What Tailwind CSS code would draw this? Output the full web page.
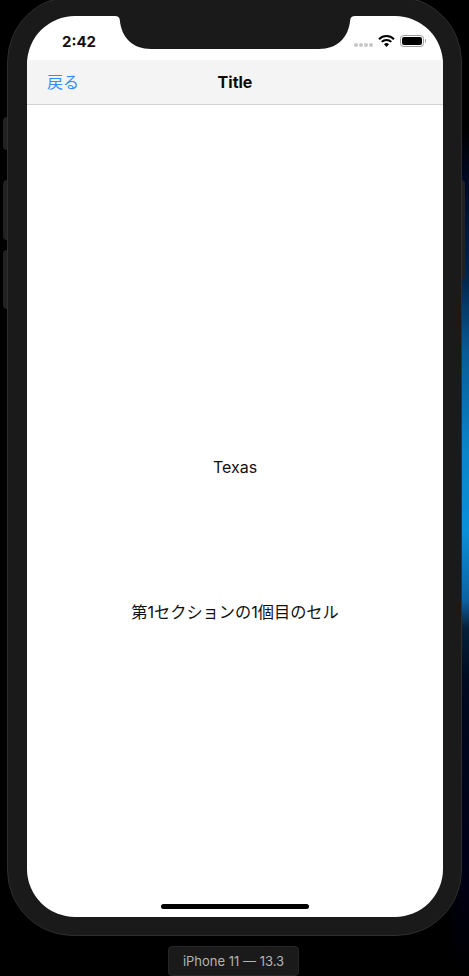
<!DOCTYPE html>
<html lang="ja">
<head>
    <meta charset="UTF-8">
    <title>iPhone 11 Simulator</title>
    <script src="https://cdn.jsdelivr.net/npm/@tailwindcss/browser@4"></script>
</head>
<body class="bg-black">
    <div class="relative w-[469px] h-[976px] overflow-hidden bg-black flex flex-col items-center font-['Inter','Noto_Sans_CJK_JP',sans-serif]">

        <!-- desktop wallpaper behind the right edge -->
        <div class="absolute top-0 right-0 w-[24px] h-full [mask-image:linear-gradient(to_left,#000_40%,transparent)] bg-[linear-gradient(180deg,#000_0px,#000_130px,#000a24_180px,#02264e_280px,#0a5a94_350px,#0a85c8_450px,#0a90d8_530px,#0e62a2_600px,#05203a_628px,#000a20_680px,#000018_860px,#000_976px)]"></div>

        <!-- side buttons -->
        <div class="absolute left-[3px] top-[117px] w-[5px] h-[33px] rounded-l-sm bg-[#222]"></div>
        <div class="absolute left-[3px] top-[180px] w-[5px] h-[60px] rounded-l-sm bg-[#222]"></div>
        <div class="absolute left-[3px] top-[250px] w-[5px] h-[59px] rounded-l-sm bg-[#222]"></div>
        <div class="absolute left-[460px] top-[180px] w-[5px] h-[100px] rounded-r-sm bg-[#222]"></div>

        <!-- device -->
        <div class="relative shrink-0 w-[455px] h-[940px] -mt-[4px] pt-[19px] pl-[19px] pr-[18px] pb-[18px] rounded-[66px] border border-[#2e2e30] bg-[#1a1a1a]">
            <div class="relative h-full rounded-[48px] bg-white overflow-hidden flex flex-col">

                <!-- status bar -->
                <div class="h-[44px] shrink-0 flex items-center justify-between pl-[35px] pr-[17px] pt-[6px]">
                    <span class="mt-[2px] text-[15px] leading-[20px] font-bold text-[#111]">2:42</span>
                    <div class="flex items-center gap-[5px]">
                        <div class="flex gap-[1.5px] mt-[8px]">
                            <i class="w-[3.5px] h-[3.5px] rounded-full bg-[#c6c6c6]"></i>
                            <i class="w-[3.5px] h-[3.5px] rounded-full bg-[#c6c6c6]"></i>
                            <i class="w-[3.5px] h-[3.5px] rounded-full bg-[#c6c6c6]"></i>
                            <i class="w-[3.5px] h-[3.5px] rounded-full bg-[#c6c6c6]"></i>
                        </div>
                        <svg width="17" height="12" viewBox="0 0 17 12" fill="none" stroke="#000" stroke-width="2">
                            <path d="M1 4.2a10.600 10.600 0 0 1 15 0"/>
                            <path d="M3.700 6.900a6.800 6.800 0 0 1 9.600 0"/>
                            <path d="M8.500 12 6 9.300a3.500 3.500 0 0 1 5 0z" fill="#000" stroke="none"/>
                        </svg>
                        <div class="flex items-center gap-[1px]">
                            <div class="w-[24px] h-[12px] rounded-[3.5px] border border-[#9a9a9a] p-[1px]">
                                <div class="w-full h-full rounded-[2px] bg-black"></div>
                            </div>
                            <div class="w-[1.5px] h-[4px] rounded-r-sm bg-[#aaa]"></div>
                        </div>
                    </div>
                </div>

                <!-- nav bar -->
                <div class="h-[45px] shrink-0 relative flex items-center justify-center bg-[#f5f4f5] border-b border-[#d2d2d3]">
                    <span class="absolute left-[20px] text-[16px] text-[#2f8ffb] leading-none">戻る</span>
                    <span class="text-[16px] font-bold text-[#0a0a0a]">Title</span>
                </div>

                <!-- cells -->
                <div class="flex-1 flex flex-col items-center text-[16px] leading-[22px] text-[#111]">
                    <p class="mt-[351px]">Texas</p>
                    <p class="mt-[123px] text-[16.2px]">第1セクションの1個目のセル</p>
                </div>

                <div class="mb-[8px] mx-auto w-[148px] h-[5px] shrink-0 rounded-full bg-black"></div>

                <!-- notch -->
                <svg class="absolute top-0 left-[88px]" width="240" height="34" viewBox="0 0 240 34" fill="#1a1a1a">
                    <path d="M0 0h240c-3 0-4.500 1.500-4.800 4C233.500 22 222 33 204 33H36C18 33 6.500 22 4.800 4 4.500 1.500 3 0 0 0z"/>
                </svg>
            </div>
        </div>

        <!-- device label -->
        <div class="mt-[10px] -ml-[2px] pt-[1px] shrink-0 w-[131px] h-[30px] rounded-[4px] border border-[#262626] bg-[#1a1a1a] flex items-center justify-center text-[13px] text-[#b4b4b4]">iPhone 11 — 13.3</div>
    </div>
</body>
</html>
